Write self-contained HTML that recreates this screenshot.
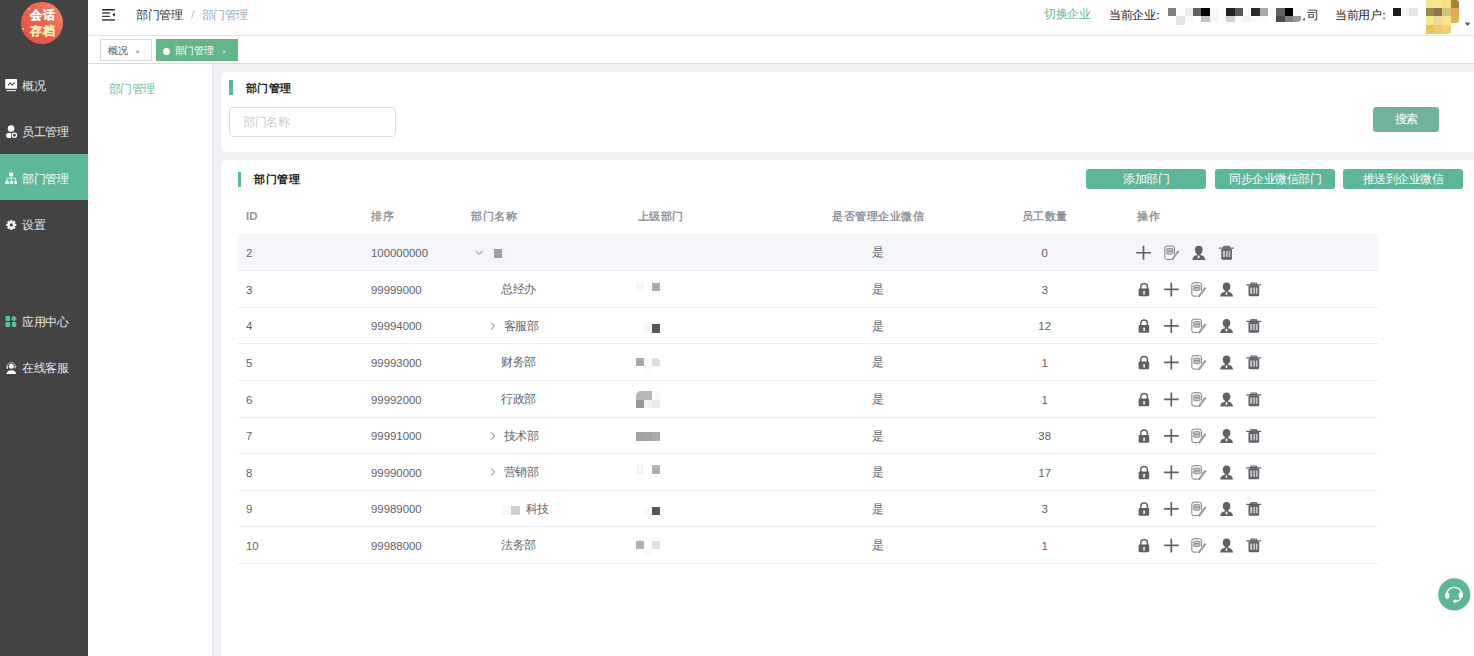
<!DOCTYPE html><html><head><meta charset="utf-8"><style>html,body{margin:0;padding:0;width:1474px;height:656px;overflow:hidden;background:#fff;position:relative;font-family:"Liberation Sans",sans-serif}</style></head><body><div id="side" style="position:absolute;left:0;top:0;width:88px;height:656px;background:#434343"></div>
<div style="position:absolute;left:21px;top:2px;width:42px;height:42px;border-radius:50%;background:linear-gradient(225deg,#f1906f 0%,#ea6450 45%,#e54f45 100%)"></div>
<div style="position:absolute;left:29.5px;top:8px;width:40px;font:bold 12px/15.6px 'Liberation Sans', sans-serif;color:#fff;text-align:left;letter-spacing:1.3px"><div style="color:#fffaf2;-webkit-text-stroke:0.25px #fffaf2">会话</div><div style="color:#ffeeb0;-webkit-text-stroke:0.25px #ffeeb0">存档</div></div>
<div style="position:absolute;left:28px;top:8px;width:2px;height:2px;border-radius:50%;background:#f6b3a6"></div>
<div style="position:absolute;left:22px;top:28px;width:2px;height:2px;border-radius:50%;background:#f6c0b3"></div>
<div style="position:absolute;left:0px;top:154px;width:88px;height:46px;background:#5cb79b;"></div>
<div style="position:absolute;left:22px;top:77px;height:18px;font:12px/18px 'Liberation Sans', sans-serif;letter-spacing:-0.5px;color:#e8e8e8;white-space:nowrap">概况</div>
<div style="position:absolute;left:22px;top:122.5px;height:18px;font:12px/18px 'Liberation Sans', sans-serif;letter-spacing:-0.5px;color:#e8e8e8;white-space:nowrap">员工管理</div>
<div style="position:absolute;left:22px;top:170px;height:18px;font:12px/18px 'Liberation Sans', sans-serif;letter-spacing:-0.5px;color:#ffffff;white-space:nowrap">部门管理</div>
<div style="position:absolute;left:22px;top:215.5px;height:18px;font:12px/18px 'Liberation Sans', sans-serif;letter-spacing:-0.5px;color:#e8e8e8;white-space:nowrap">设置</div>
<div style="position:absolute;left:22px;top:312.5px;height:18px;font:12px/18px 'Liberation Sans', sans-serif;letter-spacing:-0.5px;color:#e8e8e8;white-space:nowrap">应用中心</div>
<div style="position:absolute;left:22px;top:359px;height:18px;font:12px/18px 'Liberation Sans', sans-serif;letter-spacing:-0.5px;color:#e8e8e8;white-space:nowrap">在线客服</div>
<svg style="position:absolute;left:0;top:0" width="88" height="400" viewBox="0 0 88 400"><rect x="5.2" y="79" width="11.9" height="9.8" rx="0.8" fill="#fff"/><rect x="6.6" y="90" width="9.4" height="1.2" fill="#ddd"/><polyline points="8,85.3 10,83 12.2,85 14.7,82.4" fill="none" stroke="#434343" stroke-width="1.1"/><circle cx="11.1" cy="128.6" r="3.3" fill="#fff"/><path d="M11.1 133 L8 133 A2.5 2.5 0 0 0 8 137.9 L11.1 137.9 Z" fill="#fff"/><circle cx="14.4" cy="135.2" r="2.1" fill="none" stroke="#fff" stroke-width="1.3"/><rect x="9.2" y="172.6" width="3.9" height="3.6" fill="#fff"/><rect x="5.4" y="181" width="3.4" height="3" fill="#fff"/><rect x="10.2" y="181" width="2.8" height="3" fill="#fff"/><rect x="14.2" y="181" width="2.8" height="3" fill="#fff"/><path d="M11.2 176 V181 M7 181 V178.2 H15.6 V181" fill="none" stroke="#fff" stroke-width="0.8"/><g transform="translate(11.3,224.9)"><rect x="-1.1" y="-5" width="2.2" height="3" fill="#fff" transform="rotate(0)"/><rect x="-1.1" y="-5" width="2.2" height="3" fill="#fff" transform="rotate(45)"/><rect x="-1.1" y="-5" width="2.2" height="3" fill="#fff" transform="rotate(90)"/><rect x="-1.1" y="-5" width="2.2" height="3" fill="#fff" transform="rotate(135)"/><rect x="-1.1" y="-5" width="2.2" height="3" fill="#fff" transform="rotate(180)"/><rect x="-1.1" y="-5" width="2.2" height="3" fill="#fff" transform="rotate(225)"/><rect x="-1.1" y="-5" width="2.2" height="3" fill="#fff" transform="rotate(270)"/><rect x="-1.1" y="-5" width="2.2" height="3" fill="#fff" transform="rotate(315)"/><circle r="3.6" fill="#fff"/><circle r="1.6" fill="#434343"/></g><rect x="5.5" y="316" width="4.6" height="4.9" rx="1" fill="#5cbf9f"/><rect x="11.7" y="316.4" width="4.3" height="4.3" rx="0.9" fill="#5cbf9f" transform="rotate(45 13.85 318.55)"/><rect x="5.5" y="322" width="4.6" height="5" rx="1" fill="#5cbf9f"/><rect x="11.9" y="322" width="4.4" height="5" rx="1" fill="#5cbf9f"/><circle cx="11.4" cy="366.2" r="2.5" fill="#fff"/><path d="M7 367 A4.4 4.4 0 0 1 15.8 367" fill="none" stroke="#cfcfcf" stroke-width="0.8"/><rect x="6.7" y="366" width="1.4" height="3" rx="0.7" fill="#e6e6e6"/><rect x="14.6" y="366" width="1.2" height="2.6" rx="0.6" fill="#cfcfcf"/><path d="M6.5 374 Q6.9 370.3 11.3 370.2 Q15.7 370.3 16.1 374 Z" fill="#fff"/></svg>
<div style="position:absolute;left:88px;top:0;width:1386px;height:35px;background:#fff;border-bottom:1px solid #e9e9ec"></div>
<svg style="position:absolute;left:98px;top:4px" width="22" height="22" viewBox="0 0 22 22"><rect x="4" y="5" width="12.9" height="1.4" rx="0.6" fill="#222"/><rect x="4" y="8.2" width="8.1" height="1.6" rx="0.7" fill="#444"/><rect x="4" y="11.7" width="8.1" height="1.4" rx="0.6" fill="#444"/><rect x="4" y="15.1" width="12.9" height="1.7" fill="#555"/><path d="M16.8 8.9 L16.8 12.75 L14.3 10.6 Z" fill="#111"/></svg>
<div style="position:absolute;left:136px;top:6px;height:18px;font:12px/18px 'Liberation Sans', sans-serif;letter-spacing:-0.5px;color:#303133;white-space:nowrap">部门管理<span style="color:#c0c4cc;margin:0 8px 0 9px">/</span><span style="color:#97a8be">部门管理</span></div>
<div style="position:absolute;left:1044px;top:5px;height:18px;font:12px/18px 'Liberation Sans', sans-serif;letter-spacing:-0.5px;color:#5db59a;white-space:nowrap">切换企业</div>
<div style="position:absolute;left:1109px;top:6px;height:18px;font:12px/18px 'Liberation Sans', sans-serif;letter-spacing:-0.5px;color:#222;white-space:nowrap">当前企业<span style="margin-left:-3px">：</span></div>
<div style="position:absolute;left:1307px;top:6px;height:18px;font:12px/18px 'Liberation Sans', sans-serif;letter-spacing:-0.5px;color:#222;white-space:nowrap">司</div>
<div style="position:absolute;left:1335px;top:6px;height:18px;font:12px/18px 'Liberation Sans', sans-serif;letter-spacing:-0.5px;color:#222;white-space:nowrap">当前用户<span style="margin-left:-3px">：</span></div>
<div style="position:absolute;left:1168.1px;top:8.1px;width:8.4px;height:8.3px;background:#808080;"></div>
<div style="position:absolute;left:1176.43px;top:8.1px;width:8.4px;height:8.3px;background:#fcfcfc;"></div>
<div style="position:absolute;left:1176.43px;top:16.4px;width:8.4px;height:8.2px;background:#e3e3e3;"></div>
<div style="position:absolute;left:1184.76px;top:8.1px;width:8.4px;height:8.3px;background:#eeeeee;"></div>
<div style="position:absolute;left:1184.76px;top:16.4px;width:8.4px;height:5.4px;background:#f7f7f7;"></div>
<div style="position:absolute;left:1193.09px;top:8.1px;width:8.4px;height:8.3px;background:#606060;"></div>
<div style="position:absolute;left:1201.42px;top:8.1px;width:8.4px;height:8.3px;background:#050505;"></div>
<div style="position:absolute;left:1201.42px;top:16.4px;width:8.4px;height:5.4px;background:#c4c4c4;"></div>
<div style="position:absolute;left:1209.75px;top:8.1px;width:8.4px;height:8.3px;background:#fafafa;"></div>
<div style="position:absolute;left:1209.75px;top:16.4px;width:8.4px;height:5.4px;background:#f5f5f5;"></div>
<div style="position:absolute;left:1218.08px;top:8.1px;width:8.4px;height:8.3px;background:#fdfdfd;"></div>
<div style="position:absolute;left:1226.41px;top:8.1px;width:8.4px;height:8.3px;background:#222222;"></div>
<div style="position:absolute;left:1226.41px;top:16.4px;width:8.4px;height:5.4px;background:#d2d2d2;"></div>
<div style="position:absolute;left:1234.74px;top:8.1px;width:8.4px;height:8.3px;background:#585858;"></div>
<div style="position:absolute;left:1234.74px;top:16.4px;width:8.4px;height:5.4px;background:#f9f9f9;"></div>
<div style="position:absolute;left:1243.07px;top:16.4px;width:8.4px;height:5.4px;background:#f2f2f2;"></div>
<div style="position:absolute;left:1251.4px;top:8.1px;width:8.4px;height:8.3px;background:#2a2a2a;"></div>
<div style="position:absolute;left:1251.4px;top:16.4px;width:8.4px;height:5.4px;background:#fbfbfb;"></div>
<div style="position:absolute;left:1259.73px;top:8.1px;width:8.4px;height:8.3px;background:#a8a8a8;"></div>
<div style="position:absolute;left:1259.73px;top:16.4px;width:8.4px;height:5.4px;background:#fcfcfc;"></div>
<div style="position:absolute;left:1268.06px;top:8.1px;width:8.4px;height:8.3px;background:#f8f8f8;"></div>
<div style="position:absolute;left:1276.39px;top:8.1px;width:8.4px;height:8.3px;background:#606060;"></div>
<div style="position:absolute;left:1276.39px;top:16.4px;width:8.4px;height:5.4px;background:#4a4a4a;"></div>
<div style="position:absolute;left:1284.72px;top:8.1px;width:8.4px;height:8.3px;background:#000000;"></div>
<div style="position:absolute;left:1284.72px;top:16.4px;width:8.4px;height:5.4px;background:#808080;"></div>
<div style="position:absolute;left:1293.05px;top:8.1px;width:8.4px;height:8.3px;background:#fafafa;"></div>
<div style="position:absolute;left:1293.05px;top:16.4px;width:8.4px;height:5.4px;background:#999999;border-bottom-right-radius:4px;"></div>
<svg style="position:absolute;left:1300px;top:14px" width="8" height="8"><path d="M2.2 6.2 L4.6 3.6 L5 6.4 Z" fill="#555"/><circle cx="5.6" cy="1.6" r="0.6" fill="#bbb"/></svg>
<div style="position:absolute;left:1392.8px;top:8px;width:8px;height:8.2px;background:#1b1b1b;"></div>
<div style="position:absolute;left:1400.8px;top:8px;width:8.5px;height:8.2px;background:#f4f4f4;"></div>
<div style="position:absolute;left:1409.3px;top:8px;width:8.4px;height:8.2px;background:#e5e5e5;"></div>
<div style="position:absolute;left:1426px;top:0px;width:8.4px;height:8.5px;background:#f6e58c;"></div>
<div style="position:absolute;left:1434px;top:0px;width:8.8px;height:8.5px;background:#f9e38b;"></div>
<div style="position:absolute;left:1442.4px;top:0px;width:8.8px;height:8.5px;background:#fae080;"></div>
<div style="position:absolute;left:1450.8px;top:0px;width:8.6px;height:8.5px;background:#a3843f;border-top-right-radius:3px;"></div>
<div style="position:absolute;left:1426px;top:8px;width:8.4px;height:8.7px;background:#9e8750;"></div>
<div style="position:absolute;left:1434px;top:8px;width:8.8px;height:8.7px;background:#877647;"></div>
<div style="position:absolute;left:1442.4px;top:8px;width:8.8px;height:8.7px;background:#d3c47c;"></div>
<div style="position:absolute;left:1450.8px;top:8px;width:8.6px;height:8.7px;background:#e2a958;"></div>
<div style="position:absolute;left:1426px;top:16.2px;width:8.4px;height:8.8px;background:#fae98a;"></div>
<div style="position:absolute;left:1434px;top:16.2px;width:8.8px;height:8.8px;background:#eed8a0;"></div>
<div style="position:absolute;left:1442.4px;top:16.2px;width:8.8px;height:8.8px;background:#f6e58b;"></div>
<div style="position:absolute;left:1450.8px;top:16.2px;width:8.6px;height:6.5px;background:#d9b450;border-bottom-right-radius:3px;"></div>
<div style="position:absolute;left:1426px;top:24.5px;width:8.4px;height:9.0px;background:#ecc460;"></div>
<div style="position:absolute;left:1434px;top:24.5px;width:8.8px;height:9.0px;background:#f0cb6a;"></div>
<div style="position:absolute;left:1442.4px;top:24.5px;width:8.8px;height:9.0px;background:#f2d070;border-bottom-right-radius:3px;"></div>
<svg style="position:absolute;left:1463px;top:21px" width="9" height="7"><path d="M1.5 1.5 L7.5 1.5 L4.5 5 Z" fill="#5a5e66"/></svg>
<div style="position:absolute;left:88px;top:36px;width:1386px;height:27px;background:#fff;border-bottom:1px solid #d8dce5;box-shadow:0 1px 3px 0 rgba(0,0,0,.06)"></div>
<div style="position:absolute;left:100px;top:39px;width:50px;height:20px;border:1px solid #d8dce5;background:#fff"></div>
<div style="position:absolute;left:108px;top:44px;height:14px;font:10px/14px 'Liberation Sans', sans-serif;letter-spacing:-0.2px;color:#495060;white-space:nowrap">概况</div>
<div style="position:absolute;left:135.3px;top:44.5px;height:14px;font:8px/14px 'Liberation Sans', sans-serif;color:#7a7e86">×</div>
<div style="position:absolute;left:156px;top:39px;width:82px;height:22px;background:#64b587"></div>
<div style="position:absolute;left:163px;top:47.5px;width:7px;height:7px;border-radius:50%;background:#fff"></div>
<div style="position:absolute;left:174.5px;top:44px;height:14px;font:10px/14px 'Liberation Sans', sans-serif;letter-spacing:-0.3px;color:#fff;white-space:nowrap">部门管理</div>
<div style="position:absolute;left:221.8px;top:44.5px;height:14px;font:8px/14px 'Liberation Sans', sans-serif;color:#d6eee0">×</div>
<div style="position:absolute;left:88px;top:64px;width:124px;height:592px;background:#fff"></div>
<div style="position:absolute;left:212px;top:64px;width:1262px;height:592px;background:#f0f1f4;border-left:1px solid #e4e5e9;box-sizing:border-box"></div>
<div style="position:absolute;left:108.5px;top:80px;height:18px;font:12px/18px 'Liberation Sans', sans-serif;letter-spacing:-0.5px;color:#6cbda3;white-space:nowrap">部门管理</div>
<div style="position:absolute;left:221px;top:72px;width:1270px;height:80px;background:#fff;border-radius:6px"></div>
<div style="position:absolute;left:229.2px;top:80.4px;width:3.5px;height:15px;background:#5db59a;"></div>
<div style="position:absolute;left:245.5px;top:78.8px;height:18px;font:bold 11px/18px 'Liberation Sans', sans-serif;letter-spacing:0.5px;color:#222;white-space:nowrap">部门管理</div>
<div style="position:absolute;left:229px;top:107px;width:167px;height:30px;border:1px solid #dcdfe6;border-radius:4px;box-sizing:border-box;background:#fff"></div>
<div style="position:absolute;left:243px;top:113px;height:18px;font:12px/18px 'Liberation Sans', sans-serif;letter-spacing:-0.5px;color:#c9ccd3;white-space:nowrap">部门名称</div>
<div style="position:absolute;left:1373px;top:107px;width:66px;height:25px;background:#72b39d;border-radius:3px;font:12px/25px 'Liberation Sans', sans-serif;letter-spacing:-0.5px;color:#fff;text-align:center">搜索</div>
<div style="position:absolute;left:221px;top:160px;width:1270px;height:520px;background:#fff;border-radius:6px"></div>
<div style="position:absolute;left:237.8px;top:171.5px;width:3.3px;height:15px;background:#5db59a;"></div>
<div style="position:absolute;left:254px;top:170.3px;height:18px;font:bold 11px/18px 'Liberation Sans', sans-serif;letter-spacing:0.5px;color:#222;white-space:nowrap">部门管理</div>
<div style="position:absolute;left:1086px;top:169px;width:120px;height:20px;background:#5db59a;border-radius:3px;font:12px/20px 'Liberation Sans', sans-serif;letter-spacing:-0.5px;color:#fff;text-align:center;white-space:nowrap">添加部门</div>
<div style="position:absolute;left:1215px;top:169px;width:120px;height:20px;background:#5db59a;border-radius:3px;font:12px/20px 'Liberation Sans', sans-serif;letter-spacing:-0.5px;color:#fff;text-align:center;white-space:nowrap">同步企业微信部门</div>
<div style="position:absolute;left:1343px;top:169px;width:120px;height:20px;background:#5db59a;border-radius:3px;font:12px/20px 'Liberation Sans', sans-serif;letter-spacing:-0.5px;color:#fff;text-align:center;white-space:nowrap">推送到企业微信</div>
<div style="position:absolute;left:246px;top:206.9px;height:18px;font:bold 11.4px/18px 'Liberation Sans', sans-serif;color:#909399;white-space:nowrap">ID</div>
<div style="position:absolute;left:371px;top:206.6px;height:18px;font:bold 11px/18px 'Liberation Sans', sans-serif;letter-spacing:0.5px;color:#909399;white-space:nowrap">排序</div>
<div style="position:absolute;left:471px;top:206.6px;height:18px;font:bold 11px/18px 'Liberation Sans', sans-serif;letter-spacing:0.5px;color:#909399;white-space:nowrap">部门名称</div>
<div style="position:absolute;left:637.5px;top:206.6px;height:18px;font:bold 11px/18px 'Liberation Sans', sans-serif;letter-spacing:0.5px;color:#909399;white-space:nowrap">上级部门</div>
<div style="position:absolute;left:818.2px;top:206.6px;width:120px;height:18px;font:bold 11px/18px 'Liberation Sans', sans-serif;letter-spacing:0.5px;text-indent:0.5px;color:#909399;text-align:center;white-space:nowrap">是否管理企业微信</div>
<div style="position:absolute;left:984.7px;top:206.6px;width:120px;height:18px;font:bold 11px/18px 'Liberation Sans', sans-serif;letter-spacing:0.5px;text-indent:0.5px;color:#909399;text-align:center;white-space:nowrap">员工数量</div>
<div style="position:absolute;left:1137px;top:206.6px;height:18px;font:bold 11px/18px 'Liberation Sans', sans-serif;letter-spacing:0.5px;color:#909399;white-space:nowrap">操作</div>
<div style="position:absolute;left:238px;top:233.7px;width:1140px;height:36.5px;background:#f5f6fa"></div>
<div style="position:absolute;left:238px;top:270px;width:1140px;height:1px;background:#ebedf3;"></div>
<div style="position:absolute;left:238px;top:307px;width:1140px;height:1px;background:#ebedf3;"></div>
<div style="position:absolute;left:238px;top:343px;width:1140px;height:1px;background:#ebedf3;"></div>
<div style="position:absolute;left:238px;top:380px;width:1140px;height:1px;background:#ebedf3;"></div>
<div style="position:absolute;left:238px;top:417px;width:1140px;height:1px;background:#ebedf3;"></div>
<div style="position:absolute;left:238px;top:453px;width:1140px;height:1px;background:#ebedf3;"></div>
<div style="position:absolute;left:238px;top:490px;width:1140px;height:1px;background:#ebedf3;"></div>
<div style="position:absolute;left:238px;top:526px;width:1140px;height:1px;background:#ebedf3;"></div>
<div style="position:absolute;left:238px;top:563px;width:1140px;height:1px;background:#ebedf3;"></div>
<div style="position:absolute;left:246px;top:244.15px;height:18px;font:11.4px/18px 'Liberation Sans', sans-serif;color:#606266;white-space:nowrap">2</div>
<div style="position:absolute;left:371px;top:244.15px;height:18px;font:11.4px/18px 'Liberation Sans', sans-serif;color:#606266;white-space:nowrap">100000000</div>
<svg style="position:absolute;left:474px;top:249.85px" width="10" height="8"><path d="M1.6 1 L5 4.4 L8.4 1" fill="none" stroke="#74767b" stroke-width="1"/></svg>
<div style="position:absolute;left:818.2px;top:243.35px;width:120px;height:18px;font:12px/18px 'Liberation Sans', sans-serif;letter-spacing:-0.5px;color:#606266;text-align:center;white-space:nowrap">是</div>
<div style="position:absolute;left:984.7px;top:244.15px;width:120px;height:18px;font:11.4px/18px 'Liberation Sans', sans-serif;color:#606266;text-align:center;white-space:nowrap">0</div>
<svg style="position:absolute;left:0;top:0;overflow:visible" width="1" height="1"><g transform="translate(1136.2,245.35)"><path d="M7.3 0.5 V14.5 M0.1 7.4 H14.7" stroke="#5f6166" stroke-width="1.7"/></g><g transform="translate(1164.2,245.35)"><rect x="0.65" y="0.7" width="9.55" height="13.4" rx="2" fill="none" stroke="#7c7d81" stroke-width="1"/><rect x="2.3" y="3.1" width="6.6" height="2.8" rx="1.4" fill="#c8c9cc" stroke="#85868a" stroke-width="0.9"/><rect x="2.3" y="5.9" width="6.6" height="2.8" rx="1.4" fill="#c8c9cc" stroke="#85868a" stroke-width="0.9"/><path d="M14.4 5.6 L7.6 14.6" stroke="#fff" stroke-width="3.2"/><path d="M14.4 5.6 L7.6 14.6" stroke="#7d7e82" stroke-width="1.9"/><path d="M13.9 6.6 L8.3 13.9" stroke="#d8d8da" stroke-width="0.6"/></g><g transform="translate(1191.7,245.35)"><ellipse cx="7.05" cy="4.6" rx="3.8" ry="4.2" fill="#5f6166"/><rect x="5.3" y="7" width="3.5" height="3.6" fill="#5f6166"/><path d="M0.7 14.6 Q0.9 10.6 4.6 9.9 L9.5 9.9 Q13.2 10.6 13.5 14.6 Z" fill="#5f6166"/><ellipse cx="7" cy="11.5" rx="0.95" ry="1.6" fill="#fff"/></g><g transform="translate(1219.0,245.35)"><rect x="0" y="2.2" width="15" height="1.3" rx="0.5" fill="#5f6166"/><rect x="4" y="0.4" width="7" height="2.6" rx="1" fill="#5f6166"/><rect x="5.2" y="1.1" width="4.6" height="0.9" fill="#9a9b9f"/><rect x="2.3" y="3.3" width="10.7" height="11" rx="1.5" fill="#5f6166"/><rect x="3.9" y="5.4" width="2.1" height="6.4" fill="#c4c5c8"/><rect x="6.9" y="5.4" width="2.0" height="6.4" fill="#b8b9bc"/><rect x="9.7" y="5.4" width="1.7" height="6.4" fill="#c4c5c8"/></g></svg>
<div style="position:absolute;left:246px;top:280.8px;height:18px;font:11.4px/18px 'Liberation Sans', sans-serif;color:#606266;white-space:nowrap">3</div>
<div style="position:absolute;left:371px;top:280.8px;height:18px;font:11.4px/18px 'Liberation Sans', sans-serif;color:#606266;white-space:nowrap">99999000</div>
<div style="position:absolute;left:501px;top:280.0px;height:18px;font:12px/18px 'Liberation Sans', sans-serif;letter-spacing:-0.5px;color:#606266;white-space:nowrap">总经办</div>
<div style="position:absolute;left:818.2px;top:280.0px;width:120px;height:18px;font:12px/18px 'Liberation Sans', sans-serif;letter-spacing:-0.5px;color:#606266;text-align:center;white-space:nowrap">是</div>
<div style="position:absolute;left:984.7px;top:280.8px;width:120px;height:18px;font:11.4px/18px 'Liberation Sans', sans-serif;color:#606266;text-align:center;white-space:nowrap">3</div>
<svg style="position:absolute;left:0;top:0;overflow:visible" width="1" height="1"><g transform="translate(1138,282.5)"><path d="M2.8 6.5 V4.3 A3.3 3.3 0 0 1 9.4 4.3 V6.5" fill="none" stroke="#5f6166" stroke-width="1.5"/><rect x="0.6" y="6" width="10.6" height="7.8" rx="1.2" fill="#5f6166"/><circle cx="6.1" cy="9.3" r="0.9" fill="#fff"/><path d="M5.6 9.3 H6.6 L6.9 11.9 H5.3 Z" fill="#fff"/></g><g transform="translate(1164,282.0)"><path d="M7.3 0.5 V14.5 M0.1 7.4 H14.7" stroke="#5f6166" stroke-width="1.7"/></g><g transform="translate(1191.2,282.0)"><rect x="0.65" y="0.7" width="9.55" height="13.4" rx="2" fill="none" stroke="#7c7d81" stroke-width="1"/><rect x="2.3" y="3.1" width="6.6" height="2.8" rx="1.4" fill="#c8c9cc" stroke="#85868a" stroke-width="0.9"/><rect x="2.3" y="5.9" width="6.6" height="2.8" rx="1.4" fill="#c8c9cc" stroke="#85868a" stroke-width="0.9"/><path d="M14.4 5.6 L7.6 14.6" stroke="#fff" stroke-width="3.2"/><path d="M14.4 5.6 L7.6 14.6" stroke="#7d7e82" stroke-width="1.9"/><path d="M13.9 6.6 L8.3 13.9" stroke="#d8d8da" stroke-width="0.6"/></g><g transform="translate(1219.5,282.0)"><ellipse cx="7.05" cy="4.6" rx="3.8" ry="4.2" fill="#5f6166"/><rect x="5.3" y="7" width="3.5" height="3.6" fill="#5f6166"/><path d="M0.7 14.6 Q0.9 10.6 4.6 9.9 L9.5 9.9 Q13.2 10.6 13.5 14.6 Z" fill="#5f6166"/><ellipse cx="7" cy="11.5" rx="0.95" ry="1.6" fill="#fff"/></g><g transform="translate(1246.2,282.0)"><rect x="0" y="2.2" width="15" height="1.3" rx="0.5" fill="#5f6166"/><rect x="4" y="0.4" width="7" height="2.6" rx="1" fill="#5f6166"/><rect x="5.2" y="1.1" width="4.6" height="0.9" fill="#9a9b9f"/><rect x="2.3" y="3.3" width="10.7" height="11" rx="1.5" fill="#5f6166"/><rect x="3.9" y="5.4" width="2.1" height="6.4" fill="#c4c5c8"/><rect x="6.9" y="5.4" width="2.0" height="6.4" fill="#b8b9bc"/><rect x="9.7" y="5.4" width="1.7" height="6.4" fill="#c4c5c8"/></g></svg>
<div style="position:absolute;left:246px;top:317.3px;height:18px;font:11.4px/18px 'Liberation Sans', sans-serif;color:#606266;white-space:nowrap">4</div>
<div style="position:absolute;left:371px;top:317.3px;height:18px;font:11.4px/18px 'Liberation Sans', sans-serif;color:#606266;white-space:nowrap">99994000</div>
<div style="position:absolute;left:503.6px;top:316.5px;height:18px;font:12px/18px 'Liberation Sans', sans-serif;letter-spacing:-0.5px;color:#606266;white-space:nowrap">客服部</div>
<svg style="position:absolute;left:488.7px;top:320.8px" width="8" height="10"><path d="M2.2 1.6 L5.6 5 L2.2 8.4" fill="none" stroke="#74767b" stroke-width="1"/></svg>
<div style="position:absolute;left:818.2px;top:316.5px;width:120px;height:18px;font:12px/18px 'Liberation Sans', sans-serif;letter-spacing:-0.5px;color:#606266;text-align:center;white-space:nowrap">是</div>
<div style="position:absolute;left:984.7px;top:317.3px;width:120px;height:18px;font:11.4px/18px 'Liberation Sans', sans-serif;color:#606266;text-align:center;white-space:nowrap">12</div>
<svg style="position:absolute;left:0;top:0;overflow:visible" width="1" height="1"><g transform="translate(1138,319.0)"><path d="M2.8 6.5 V4.3 A3.3 3.3 0 0 1 9.4 4.3 V6.5" fill="none" stroke="#5f6166" stroke-width="1.5"/><rect x="0.6" y="6" width="10.6" height="7.8" rx="1.2" fill="#5f6166"/><circle cx="6.1" cy="9.3" r="0.9" fill="#fff"/><path d="M5.6 9.3 H6.6 L6.9 11.9 H5.3 Z" fill="#fff"/></g><g transform="translate(1164,318.5)"><path d="M7.3 0.5 V14.5 M0.1 7.4 H14.7" stroke="#5f6166" stroke-width="1.7"/></g><g transform="translate(1191.2,318.5)"><rect x="0.65" y="0.7" width="9.55" height="13.4" rx="2" fill="none" stroke="#7c7d81" stroke-width="1"/><rect x="2.3" y="3.1" width="6.6" height="2.8" rx="1.4" fill="#c8c9cc" stroke="#85868a" stroke-width="0.9"/><rect x="2.3" y="5.9" width="6.6" height="2.8" rx="1.4" fill="#c8c9cc" stroke="#85868a" stroke-width="0.9"/><path d="M14.4 5.6 L7.6 14.6" stroke="#fff" stroke-width="3.2"/><path d="M14.4 5.6 L7.6 14.6" stroke="#7d7e82" stroke-width="1.9"/><path d="M13.9 6.6 L8.3 13.9" stroke="#d8d8da" stroke-width="0.6"/></g><g transform="translate(1219.5,318.5)"><ellipse cx="7.05" cy="4.6" rx="3.8" ry="4.2" fill="#5f6166"/><rect x="5.3" y="7" width="3.5" height="3.6" fill="#5f6166"/><path d="M0.7 14.6 Q0.9 10.6 4.6 9.9 L9.5 9.9 Q13.2 10.6 13.5 14.6 Z" fill="#5f6166"/><ellipse cx="7" cy="11.5" rx="0.95" ry="1.6" fill="#fff"/></g><g transform="translate(1246.2,318.5)"><rect x="0" y="2.2" width="15" height="1.3" rx="0.5" fill="#5f6166"/><rect x="4" y="0.4" width="7" height="2.6" rx="1" fill="#5f6166"/><rect x="5.2" y="1.1" width="4.6" height="0.9" fill="#9a9b9f"/><rect x="2.3" y="3.3" width="10.7" height="11" rx="1.5" fill="#5f6166"/><rect x="3.9" y="5.4" width="2.1" height="6.4" fill="#c4c5c8"/><rect x="6.9" y="5.4" width="2.0" height="6.4" fill="#b8b9bc"/><rect x="9.7" y="5.4" width="1.7" height="6.4" fill="#c4c5c8"/></g></svg>
<div style="position:absolute;left:246px;top:353.8px;height:18px;font:11.4px/18px 'Liberation Sans', sans-serif;color:#606266;white-space:nowrap">5</div>
<div style="position:absolute;left:371px;top:353.8px;height:18px;font:11.4px/18px 'Liberation Sans', sans-serif;color:#606266;white-space:nowrap">99993000</div>
<div style="position:absolute;left:501px;top:353.0px;height:18px;font:12px/18px 'Liberation Sans', sans-serif;letter-spacing:-0.5px;color:#606266;white-space:nowrap">财务部</div>
<div style="position:absolute;left:818.2px;top:353.0px;width:120px;height:18px;font:12px/18px 'Liberation Sans', sans-serif;letter-spacing:-0.5px;color:#606266;text-align:center;white-space:nowrap">是</div>
<div style="position:absolute;left:984.7px;top:353.8px;width:120px;height:18px;font:11.4px/18px 'Liberation Sans', sans-serif;color:#606266;text-align:center;white-space:nowrap">1</div>
<svg style="position:absolute;left:0;top:0;overflow:visible" width="1" height="1"><g transform="translate(1138,355.5)"><path d="M2.8 6.5 V4.3 A3.3 3.3 0 0 1 9.4 4.3 V6.5" fill="none" stroke="#5f6166" stroke-width="1.5"/><rect x="0.6" y="6" width="10.6" height="7.8" rx="1.2" fill="#5f6166"/><circle cx="6.1" cy="9.3" r="0.9" fill="#fff"/><path d="M5.6 9.3 H6.6 L6.9 11.9 H5.3 Z" fill="#fff"/></g><g transform="translate(1164,355.0)"><path d="M7.3 0.5 V14.5 M0.1 7.4 H14.7" stroke="#5f6166" stroke-width="1.7"/></g><g transform="translate(1191.2,355.0)"><rect x="0.65" y="0.7" width="9.55" height="13.4" rx="2" fill="none" stroke="#7c7d81" stroke-width="1"/><rect x="2.3" y="3.1" width="6.6" height="2.8" rx="1.4" fill="#c8c9cc" stroke="#85868a" stroke-width="0.9"/><rect x="2.3" y="5.9" width="6.6" height="2.8" rx="1.4" fill="#c8c9cc" stroke="#85868a" stroke-width="0.9"/><path d="M14.4 5.6 L7.6 14.6" stroke="#fff" stroke-width="3.2"/><path d="M14.4 5.6 L7.6 14.6" stroke="#7d7e82" stroke-width="1.9"/><path d="M13.9 6.6 L8.3 13.9" stroke="#d8d8da" stroke-width="0.6"/></g><g transform="translate(1219.5,355.0)"><ellipse cx="7.05" cy="4.6" rx="3.8" ry="4.2" fill="#5f6166"/><rect x="5.3" y="7" width="3.5" height="3.6" fill="#5f6166"/><path d="M0.7 14.6 Q0.9 10.6 4.6 9.9 L9.5 9.9 Q13.2 10.6 13.5 14.6 Z" fill="#5f6166"/><ellipse cx="7" cy="11.5" rx="0.95" ry="1.6" fill="#fff"/></g><g transform="translate(1246.2,355.0)"><rect x="0" y="2.2" width="15" height="1.3" rx="0.5" fill="#5f6166"/><rect x="4" y="0.4" width="7" height="2.6" rx="1" fill="#5f6166"/><rect x="5.2" y="1.1" width="4.6" height="0.9" fill="#9a9b9f"/><rect x="2.3" y="3.3" width="10.7" height="11" rx="1.5" fill="#5f6166"/><rect x="3.9" y="5.4" width="2.1" height="6.4" fill="#c4c5c8"/><rect x="6.9" y="5.4" width="2.0" height="6.4" fill="#b8b9bc"/><rect x="9.7" y="5.4" width="1.7" height="6.4" fill="#c4c5c8"/></g></svg>
<div style="position:absolute;left:246px;top:390.8px;height:18px;font:11.4px/18px 'Liberation Sans', sans-serif;color:#606266;white-space:nowrap">6</div>
<div style="position:absolute;left:371px;top:390.8px;height:18px;font:11.4px/18px 'Liberation Sans', sans-serif;color:#606266;white-space:nowrap">99992000</div>
<div style="position:absolute;left:501px;top:390.0px;height:18px;font:12px/18px 'Liberation Sans', sans-serif;letter-spacing:-0.5px;color:#606266;white-space:nowrap">行政部</div>
<div style="position:absolute;left:818.2px;top:390.0px;width:120px;height:18px;font:12px/18px 'Liberation Sans', sans-serif;letter-spacing:-0.5px;color:#606266;text-align:center;white-space:nowrap">是</div>
<div style="position:absolute;left:984.7px;top:390.8px;width:120px;height:18px;font:11.4px/18px 'Liberation Sans', sans-serif;color:#606266;text-align:center;white-space:nowrap">1</div>
<svg style="position:absolute;left:0;top:0;overflow:visible" width="1" height="1"><g transform="translate(1138,392.5)"><path d="M2.8 6.5 V4.3 A3.3 3.3 0 0 1 9.4 4.3 V6.5" fill="none" stroke="#5f6166" stroke-width="1.5"/><rect x="0.6" y="6" width="10.6" height="7.8" rx="1.2" fill="#5f6166"/><circle cx="6.1" cy="9.3" r="0.9" fill="#fff"/><path d="M5.6 9.3 H6.6 L6.9 11.9 H5.3 Z" fill="#fff"/></g><g transform="translate(1164,392.0)"><path d="M7.3 0.5 V14.5 M0.1 7.4 H14.7" stroke="#5f6166" stroke-width="1.7"/></g><g transform="translate(1191.2,392.0)"><rect x="0.65" y="0.7" width="9.55" height="13.4" rx="2" fill="none" stroke="#7c7d81" stroke-width="1"/><rect x="2.3" y="3.1" width="6.6" height="2.8" rx="1.4" fill="#c8c9cc" stroke="#85868a" stroke-width="0.9"/><rect x="2.3" y="5.9" width="6.6" height="2.8" rx="1.4" fill="#c8c9cc" stroke="#85868a" stroke-width="0.9"/><path d="M14.4 5.6 L7.6 14.6" stroke="#fff" stroke-width="3.2"/><path d="M14.4 5.6 L7.6 14.6" stroke="#7d7e82" stroke-width="1.9"/><path d="M13.9 6.6 L8.3 13.9" stroke="#d8d8da" stroke-width="0.6"/></g><g transform="translate(1219.5,392.0)"><ellipse cx="7.05" cy="4.6" rx="3.8" ry="4.2" fill="#5f6166"/><rect x="5.3" y="7" width="3.5" height="3.6" fill="#5f6166"/><path d="M0.7 14.6 Q0.9 10.6 4.6 9.9 L9.5 9.9 Q13.2 10.6 13.5 14.6 Z" fill="#5f6166"/><ellipse cx="7" cy="11.5" rx="0.95" ry="1.6" fill="#fff"/></g><g transform="translate(1246.2,392.0)"><rect x="0" y="2.2" width="15" height="1.3" rx="0.5" fill="#5f6166"/><rect x="4" y="0.4" width="7" height="2.6" rx="1" fill="#5f6166"/><rect x="5.2" y="1.1" width="4.6" height="0.9" fill="#9a9b9f"/><rect x="2.3" y="3.3" width="10.7" height="11" rx="1.5" fill="#5f6166"/><rect x="3.9" y="5.4" width="2.1" height="6.4" fill="#c4c5c8"/><rect x="6.9" y="5.4" width="2.0" height="6.4" fill="#b8b9bc"/><rect x="9.7" y="5.4" width="1.7" height="6.4" fill="#c4c5c8"/></g></svg>
<div style="position:absolute;left:246px;top:427.3px;height:18px;font:11.4px/18px 'Liberation Sans', sans-serif;color:#606266;white-space:nowrap">7</div>
<div style="position:absolute;left:371px;top:427.3px;height:18px;font:11.4px/18px 'Liberation Sans', sans-serif;color:#606266;white-space:nowrap">99991000</div>
<div style="position:absolute;left:503.6px;top:426.5px;height:18px;font:12px/18px 'Liberation Sans', sans-serif;letter-spacing:-0.5px;color:#606266;white-space:nowrap">技术部</div>
<svg style="position:absolute;left:488.7px;top:430.8px" width="8" height="10"><path d="M2.2 1.6 L5.6 5 L2.2 8.4" fill="none" stroke="#74767b" stroke-width="1"/></svg>
<div style="position:absolute;left:818.2px;top:426.5px;width:120px;height:18px;font:12px/18px 'Liberation Sans', sans-serif;letter-spacing:-0.5px;color:#606266;text-align:center;white-space:nowrap">是</div>
<div style="position:absolute;left:984.7px;top:427.3px;width:120px;height:18px;font:11.4px/18px 'Liberation Sans', sans-serif;color:#606266;text-align:center;white-space:nowrap">38</div>
<svg style="position:absolute;left:0;top:0;overflow:visible" width="1" height="1"><g transform="translate(1138,429.0)"><path d="M2.8 6.5 V4.3 A3.3 3.3 0 0 1 9.4 4.3 V6.5" fill="none" stroke="#5f6166" stroke-width="1.5"/><rect x="0.6" y="6" width="10.6" height="7.8" rx="1.2" fill="#5f6166"/><circle cx="6.1" cy="9.3" r="0.9" fill="#fff"/><path d="M5.6 9.3 H6.6 L6.9 11.9 H5.3 Z" fill="#fff"/></g><g transform="translate(1164,428.5)"><path d="M7.3 0.5 V14.5 M0.1 7.4 H14.7" stroke="#5f6166" stroke-width="1.7"/></g><g transform="translate(1191.2,428.5)"><rect x="0.65" y="0.7" width="9.55" height="13.4" rx="2" fill="none" stroke="#7c7d81" stroke-width="1"/><rect x="2.3" y="3.1" width="6.6" height="2.8" rx="1.4" fill="#c8c9cc" stroke="#85868a" stroke-width="0.9"/><rect x="2.3" y="5.9" width="6.6" height="2.8" rx="1.4" fill="#c8c9cc" stroke="#85868a" stroke-width="0.9"/><path d="M14.4 5.6 L7.6 14.6" stroke="#fff" stroke-width="3.2"/><path d="M14.4 5.6 L7.6 14.6" stroke="#7d7e82" stroke-width="1.9"/><path d="M13.9 6.6 L8.3 13.9" stroke="#d8d8da" stroke-width="0.6"/></g><g transform="translate(1219.5,428.5)"><ellipse cx="7.05" cy="4.6" rx="3.8" ry="4.2" fill="#5f6166"/><rect x="5.3" y="7" width="3.5" height="3.6" fill="#5f6166"/><path d="M0.7 14.6 Q0.9 10.6 4.6 9.9 L9.5 9.9 Q13.2 10.6 13.5 14.6 Z" fill="#5f6166"/><ellipse cx="7" cy="11.5" rx="0.95" ry="1.6" fill="#fff"/></g><g transform="translate(1246.2,428.5)"><rect x="0" y="2.2" width="15" height="1.3" rx="0.5" fill="#5f6166"/><rect x="4" y="0.4" width="7" height="2.6" rx="1" fill="#5f6166"/><rect x="5.2" y="1.1" width="4.6" height="0.9" fill="#9a9b9f"/><rect x="2.3" y="3.3" width="10.7" height="11" rx="1.5" fill="#5f6166"/><rect x="3.9" y="5.4" width="2.1" height="6.4" fill="#c4c5c8"/><rect x="6.9" y="5.4" width="2.0" height="6.4" fill="#b8b9bc"/><rect x="9.7" y="5.4" width="1.7" height="6.4" fill="#c4c5c8"/></g></svg>
<div style="position:absolute;left:246px;top:463.8px;height:18px;font:11.4px/18px 'Liberation Sans', sans-serif;color:#606266;white-space:nowrap">8</div>
<div style="position:absolute;left:371px;top:463.8px;height:18px;font:11.4px/18px 'Liberation Sans', sans-serif;color:#606266;white-space:nowrap">99990000</div>
<div style="position:absolute;left:503.6px;top:463.0px;height:18px;font:12px/18px 'Liberation Sans', sans-serif;letter-spacing:-0.5px;color:#606266;white-space:nowrap">营销部</div>
<svg style="position:absolute;left:488.7px;top:467.3px" width="8" height="10"><path d="M2.2 1.6 L5.6 5 L2.2 8.4" fill="none" stroke="#74767b" stroke-width="1"/></svg>
<div style="position:absolute;left:818.2px;top:463.0px;width:120px;height:18px;font:12px/18px 'Liberation Sans', sans-serif;letter-spacing:-0.5px;color:#606266;text-align:center;white-space:nowrap">是</div>
<div style="position:absolute;left:984.7px;top:463.8px;width:120px;height:18px;font:11.4px/18px 'Liberation Sans', sans-serif;color:#606266;text-align:center;white-space:nowrap">17</div>
<svg style="position:absolute;left:0;top:0;overflow:visible" width="1" height="1"><g transform="translate(1138,465.5)"><path d="M2.8 6.5 V4.3 A3.3 3.3 0 0 1 9.4 4.3 V6.5" fill="none" stroke="#5f6166" stroke-width="1.5"/><rect x="0.6" y="6" width="10.6" height="7.8" rx="1.2" fill="#5f6166"/><circle cx="6.1" cy="9.3" r="0.9" fill="#fff"/><path d="M5.6 9.3 H6.6 L6.9 11.9 H5.3 Z" fill="#fff"/></g><g transform="translate(1164,465.0)"><path d="M7.3 0.5 V14.5 M0.1 7.4 H14.7" stroke="#5f6166" stroke-width="1.7"/></g><g transform="translate(1191.2,465.0)"><rect x="0.65" y="0.7" width="9.55" height="13.4" rx="2" fill="none" stroke="#7c7d81" stroke-width="1"/><rect x="2.3" y="3.1" width="6.6" height="2.8" rx="1.4" fill="#c8c9cc" stroke="#85868a" stroke-width="0.9"/><rect x="2.3" y="5.9" width="6.6" height="2.8" rx="1.4" fill="#c8c9cc" stroke="#85868a" stroke-width="0.9"/><path d="M14.4 5.6 L7.6 14.6" stroke="#fff" stroke-width="3.2"/><path d="M14.4 5.6 L7.6 14.6" stroke="#7d7e82" stroke-width="1.9"/><path d="M13.9 6.6 L8.3 13.9" stroke="#d8d8da" stroke-width="0.6"/></g><g transform="translate(1219.5,465.0)"><ellipse cx="7.05" cy="4.6" rx="3.8" ry="4.2" fill="#5f6166"/><rect x="5.3" y="7" width="3.5" height="3.6" fill="#5f6166"/><path d="M0.7 14.6 Q0.9 10.6 4.6 9.9 L9.5 9.9 Q13.2 10.6 13.5 14.6 Z" fill="#5f6166"/><ellipse cx="7" cy="11.5" rx="0.95" ry="1.6" fill="#fff"/></g><g transform="translate(1246.2,465.0)"><rect x="0" y="2.2" width="15" height="1.3" rx="0.5" fill="#5f6166"/><rect x="4" y="0.4" width="7" height="2.6" rx="1" fill="#5f6166"/><rect x="5.2" y="1.1" width="4.6" height="0.9" fill="#9a9b9f"/><rect x="2.3" y="3.3" width="10.7" height="11" rx="1.5" fill="#5f6166"/><rect x="3.9" y="5.4" width="2.1" height="6.4" fill="#c4c5c8"/><rect x="6.9" y="5.4" width="2.0" height="6.4" fill="#b8b9bc"/><rect x="9.7" y="5.4" width="1.7" height="6.4" fill="#c4c5c8"/></g></svg>
<div style="position:absolute;left:246px;top:500.3px;height:18px;font:11.4px/18px 'Liberation Sans', sans-serif;color:#606266;white-space:nowrap">9</div>
<div style="position:absolute;left:371px;top:500.3px;height:18px;font:11.4px/18px 'Liberation Sans', sans-serif;color:#606266;white-space:nowrap">99989000</div>
<div style="position:absolute;left:525.8px;top:499.5px;height:18px;font:12px/18px 'Liberation Sans', sans-serif;letter-spacing:-0.5px;color:#606266;white-space:nowrap">科技</div>
<div style="position:absolute;left:818.2px;top:499.5px;width:120px;height:18px;font:12px/18px 'Liberation Sans', sans-serif;letter-spacing:-0.5px;color:#606266;text-align:center;white-space:nowrap">是</div>
<div style="position:absolute;left:984.7px;top:500.3px;width:120px;height:18px;font:11.4px/18px 'Liberation Sans', sans-serif;color:#606266;text-align:center;white-space:nowrap">3</div>
<svg style="position:absolute;left:0;top:0;overflow:visible" width="1" height="1"><g transform="translate(1138,502.0)"><path d="M2.8 6.5 V4.3 A3.3 3.3 0 0 1 9.4 4.3 V6.5" fill="none" stroke="#5f6166" stroke-width="1.5"/><rect x="0.6" y="6" width="10.6" height="7.8" rx="1.2" fill="#5f6166"/><circle cx="6.1" cy="9.3" r="0.9" fill="#fff"/><path d="M5.6 9.3 H6.6 L6.9 11.9 H5.3 Z" fill="#fff"/></g><g transform="translate(1164,501.5)"><path d="M7.3 0.5 V14.5 M0.1 7.4 H14.7" stroke="#5f6166" stroke-width="1.7"/></g><g transform="translate(1191.2,501.5)"><rect x="0.65" y="0.7" width="9.55" height="13.4" rx="2" fill="none" stroke="#7c7d81" stroke-width="1"/><rect x="2.3" y="3.1" width="6.6" height="2.8" rx="1.4" fill="#c8c9cc" stroke="#85868a" stroke-width="0.9"/><rect x="2.3" y="5.9" width="6.6" height="2.8" rx="1.4" fill="#c8c9cc" stroke="#85868a" stroke-width="0.9"/><path d="M14.4 5.6 L7.6 14.6" stroke="#fff" stroke-width="3.2"/><path d="M14.4 5.6 L7.6 14.6" stroke="#7d7e82" stroke-width="1.9"/><path d="M13.9 6.6 L8.3 13.9" stroke="#d8d8da" stroke-width="0.6"/></g><g transform="translate(1219.5,501.5)"><ellipse cx="7.05" cy="4.6" rx="3.8" ry="4.2" fill="#5f6166"/><rect x="5.3" y="7" width="3.5" height="3.6" fill="#5f6166"/><path d="M0.7 14.6 Q0.9 10.6 4.6 9.9 L9.5 9.9 Q13.2 10.6 13.5 14.6 Z" fill="#5f6166"/><ellipse cx="7" cy="11.5" rx="0.95" ry="1.6" fill="#fff"/></g><g transform="translate(1246.2,501.5)"><rect x="0" y="2.2" width="15" height="1.3" rx="0.5" fill="#5f6166"/><rect x="4" y="0.4" width="7" height="2.6" rx="1" fill="#5f6166"/><rect x="5.2" y="1.1" width="4.6" height="0.9" fill="#9a9b9f"/><rect x="2.3" y="3.3" width="10.7" height="11" rx="1.5" fill="#5f6166"/><rect x="3.9" y="5.4" width="2.1" height="6.4" fill="#c4c5c8"/><rect x="6.9" y="5.4" width="2.0" height="6.4" fill="#b8b9bc"/><rect x="9.7" y="5.4" width="1.7" height="6.4" fill="#c4c5c8"/></g></svg>
<div style="position:absolute;left:246px;top:536.8px;height:18px;font:11.4px/18px 'Liberation Sans', sans-serif;color:#606266;white-space:nowrap">10</div>
<div style="position:absolute;left:371px;top:536.8px;height:18px;font:11.4px/18px 'Liberation Sans', sans-serif;color:#606266;white-space:nowrap">99988000</div>
<div style="position:absolute;left:501px;top:536.0px;height:18px;font:12px/18px 'Liberation Sans', sans-serif;letter-spacing:-0.5px;color:#606266;white-space:nowrap">法务部</div>
<div style="position:absolute;left:818.2px;top:536.0px;width:120px;height:18px;font:12px/18px 'Liberation Sans', sans-serif;letter-spacing:-0.5px;color:#606266;text-align:center;white-space:nowrap">是</div>
<div style="position:absolute;left:984.7px;top:536.8px;width:120px;height:18px;font:11.4px/18px 'Liberation Sans', sans-serif;color:#606266;text-align:center;white-space:nowrap">1</div>
<svg style="position:absolute;left:0;top:0;overflow:visible" width="1" height="1"><g transform="translate(1138,538.5)"><path d="M2.8 6.5 V4.3 A3.3 3.3 0 0 1 9.4 4.3 V6.5" fill="none" stroke="#5f6166" stroke-width="1.5"/><rect x="0.6" y="6" width="10.6" height="7.8" rx="1.2" fill="#5f6166"/><circle cx="6.1" cy="9.3" r="0.9" fill="#fff"/><path d="M5.6 9.3 H6.6 L6.9 11.9 H5.3 Z" fill="#fff"/></g><g transform="translate(1164,538.0)"><path d="M7.3 0.5 V14.5 M0.1 7.4 H14.7" stroke="#5f6166" stroke-width="1.7"/></g><g transform="translate(1191.2,538.0)"><rect x="0.65" y="0.7" width="9.55" height="13.4" rx="2" fill="none" stroke="#7c7d81" stroke-width="1"/><rect x="2.3" y="3.1" width="6.6" height="2.8" rx="1.4" fill="#c8c9cc" stroke="#85868a" stroke-width="0.9"/><rect x="2.3" y="5.9" width="6.6" height="2.8" rx="1.4" fill="#c8c9cc" stroke="#85868a" stroke-width="0.9"/><path d="M14.4 5.6 L7.6 14.6" stroke="#fff" stroke-width="3.2"/><path d="M14.4 5.6 L7.6 14.6" stroke="#7d7e82" stroke-width="1.9"/><path d="M13.9 6.6 L8.3 13.9" stroke="#d8d8da" stroke-width="0.6"/></g><g transform="translate(1219.5,538.0)"><ellipse cx="7.05" cy="4.6" rx="3.8" ry="4.2" fill="#5f6166"/><rect x="5.3" y="7" width="3.5" height="3.6" fill="#5f6166"/><path d="M0.7 14.6 Q0.9 10.6 4.6 9.9 L9.5 9.9 Q13.2 10.6 13.5 14.6 Z" fill="#5f6166"/><ellipse cx="7" cy="11.5" rx="0.95" ry="1.6" fill="#fff"/></g><g transform="translate(1246.2,538.0)"><rect x="0" y="2.2" width="15" height="1.3" rx="0.5" fill="#5f6166"/><rect x="4" y="0.4" width="7" height="2.6" rx="1" fill="#5f6166"/><rect x="5.2" y="1.1" width="4.6" height="0.9" fill="#9a9b9f"/><rect x="2.3" y="3.3" width="10.7" height="11" rx="1.5" fill="#5f6166"/><rect x="3.9" y="5.4" width="2.1" height="6.4" fill="#c4c5c8"/><rect x="6.9" y="5.4" width="2.0" height="6.4" fill="#b8b9bc"/><rect x="9.7" y="5.4" width="1.7" height="6.4" fill="#c4c5c8"/></g></svg>
<div style="position:absolute;left:494px;top:249.1px;width:8px;height:8.6px;background:#a0a1a5;"></div>
<div style="position:absolute;left:502px;top:249.7px;width:8px;height:8px;background:#f3f3f5;"></div>
<div style="position:absolute;left:502.4px;top:506.4px;width:8.6px;height:9px;background:#f8f8f8;"></div>
<div style="position:absolute;left:511px;top:506.4px;width:8.6px;height:9px;background:#cfcfcf;"></div>
<div style="position:absolute;left:635.6px;top:282.6px;width:8.3px;height:8.4px;background:#f3f3f3;"></div>
<div style="position:absolute;left:652.2px;top:282.6px;width:8.3px;height:8.4px;background:#aaaaaa;"></div>
<div style="position:absolute;left:643.9px;top:324.3px;width:8.3px;height:8.4px;background:#f5f5f6;"></div>
<div style="position:absolute;left:652.2px;top:324.3px;width:8.3px;height:8.4px;background:#55555a;"></div>
<div style="position:absolute;left:635.6px;top:357.5px;width:8.3px;height:8.4px;background:#aaaaaa;"></div>
<div style="position:absolute;left:643.9px;top:357.5px;width:8.3px;height:8.4px;background:#fafafc;"></div>
<div style="position:absolute;left:652.2px;top:357.5px;width:8.3px;height:8.4px;background:#e0e0e0;border-top-right-radius:4px;"></div>
<div style="position:absolute;left:643.9px;top:365.9px;width:8.3px;height:8.4px;background:#fafafc;"></div>
<div style="position:absolute;left:635.6px;top:391.4px;width:16.6px;height:8.4px;background:#b8b8b8;border-top-left-radius:5px;"></div>
<div style="position:absolute;left:652.2px;top:391.4px;width:8.3px;height:8.4px;background:#fafafa;"></div>
<div style="position:absolute;left:635.6px;top:399.8px;width:8.3px;height:8.4px;background:#999999;"></div>
<div style="position:absolute;left:643.9px;top:399.8px;width:8.3px;height:8.4px;background:#f3f3f3;"></div>
<div style="position:absolute;left:652.2px;top:399.8px;width:8.3px;height:8.4px;background:#eaeaf0;"></div>
<div style="position:absolute;left:635.6px;top:432.2px;width:8.3px;height:8.4px;background:#a2a2a2;"></div>
<div style="position:absolute;left:643.9px;top:432.2px;width:8.3px;height:8.4px;background:#a5a5a5;"></div>
<div style="position:absolute;left:652.2px;top:432.2px;width:8.3px;height:8.4px;background:#adadad;"></div>
<div style="position:absolute;left:635.6px;top:465.4px;width:8.3px;height:8.4px;background:#f5f5f5;"></div>
<div style="position:absolute;left:652.2px;top:465.4px;width:8.3px;height:8.4px;background:#b0b0b0;"></div>
<div style="position:absolute;left:643.9px;top:507px;width:8.3px;height:8.4px;background:#f8f8f8;"></div>
<div style="position:absolute;left:652.2px;top:507px;width:8.3px;height:8.4px;background:#555555;"></div>
<div style="position:absolute;left:635.6px;top:540.5px;width:8.3px;height:8.4px;background:#b0b0b0;"></div>
<div style="position:absolute;left:652.2px;top:540.5px;width:8.3px;height:8.4px;background:#e0e0e6;"></div>
<div style="position:absolute;left:643.9px;top:548.9px;width:8.3px;height:8.4px;background:#fafafc;"></div>
<svg style="position:absolute;left:1438px;top:578px" width="33" height="33" viewBox="0 0 33 33"><circle cx="16.25" cy="16.4" r="16.1" fill="#5db59a"/><path d="M8.6 17 A7.7 7.7 0 0 1 24 17" fill="none" stroke="#fff" stroke-width="1.3"/><rect x="7.1" y="14.6" width="4.3" height="6.2" rx="2.1" fill="#fff"/><rect x="20.6" y="14.6" width="4.2" height="5.8" rx="2.1" fill="#fff"/><path d="M22.6 19.5 Q22.2 23 18 23.3" fill="none" stroke="#fff" stroke-width="1.1"/><circle cx="17" cy="23.3" r="1.8" fill="#fff"/></svg></body></html>
